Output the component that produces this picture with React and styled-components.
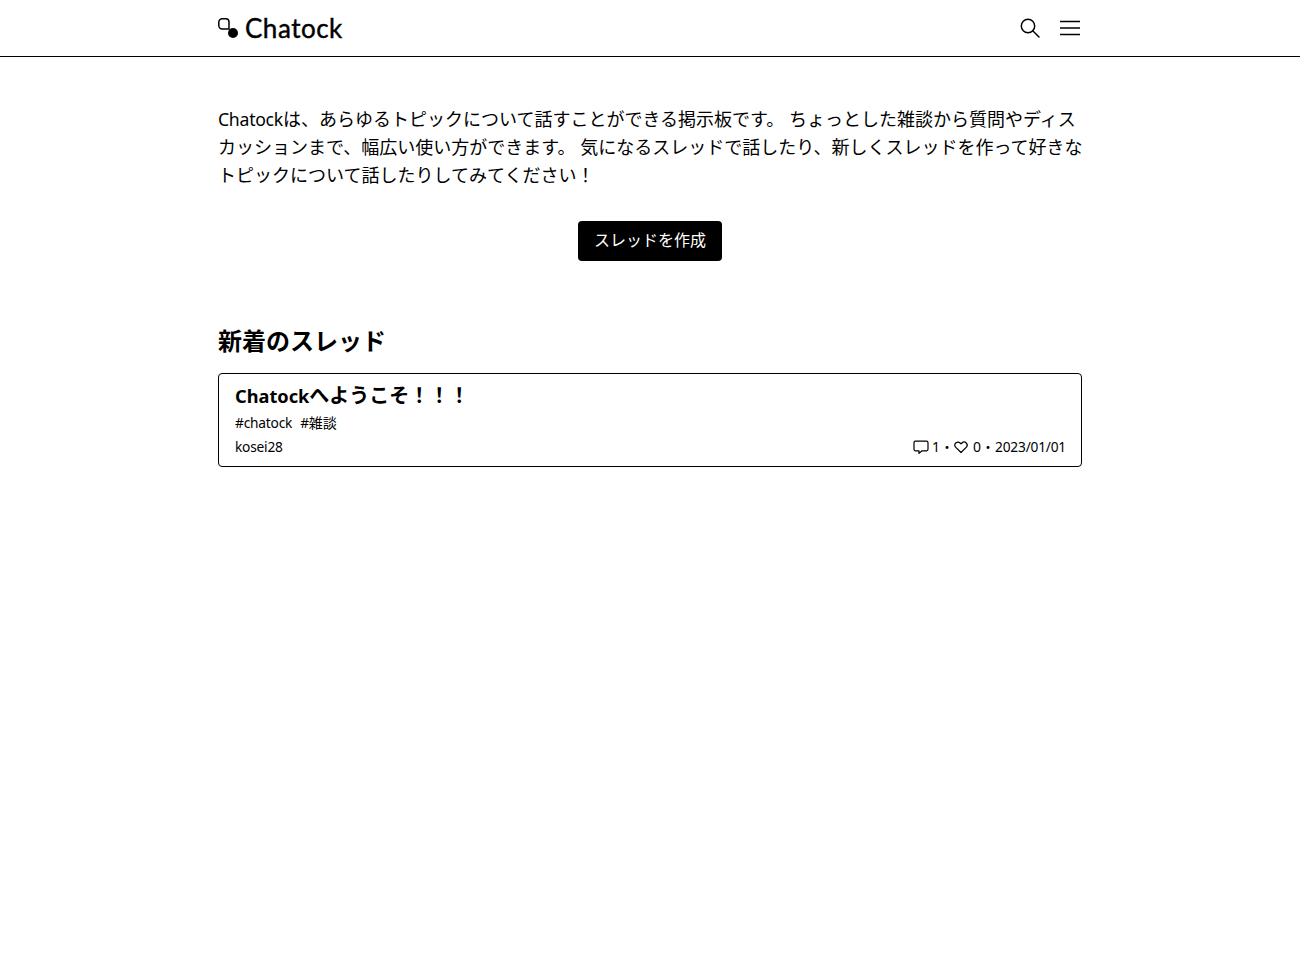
import React from 'react'
import styled, { createGlobalStyle } from 'styled-components'

const Global = createGlobalStyle`
  * { box-sizing: border-box; }
  body {
    margin: 0;
    background: #fff;
    color: #000;
    font-family: "Noto Sans", "Noto Sans CJK JP", sans-serif;
  }
`

const Header = styled.header`
  height: 57px;
  border-bottom: 1px solid #000;
  display: flex;
  justify-content: center;
`

const HeaderInner = styled.div`
  width: 864px;
  display: flex;
  align-items: center;
  justify-content: space-between;
`

const Logo = styled.a`
  display: flex;
  align-items: center;
  gap: 7px;
  font-family: "Lato", sans-serif;
  font-size: 26px;
  line-height: 56px;
  letter-spacing: 0.5px;
  -webkit-text-stroke: 0.4px #000;
  color: #000;
`

const IconRow = styled.div`
  display: flex;
  align-items: center;
  gap: 20px;
  margin-right: 2px;
`

const Main = styled.main`
  width: 864px;
  margin: 0 auto;
  padding-top: 48px;
`

const Intro = styled.p`
  margin: 0 -4px 0 0;
  font-size: 18px;
  line-height: 28px;
`

// latin text runs a bit narrower than the japanese around it
const Latin = styled.span`
  font-size: ${(p) => p.$scale || 0.98}em;
  letter-spacing: ${(p) => (p.$scale ? 0 : -0.015)}em;
  line-height: 1;
`

const ButtonRow = styled.div`
  display: flex;
  justify-content: center;
  margin-top: 32px;
`

const Button = styled.button`
  height: 40px;
  padding: 0 16px 2px;
  border: 0;
  border-radius: 4px;
  background: #000;
  color: #fff;
  font: inherit;
  font-size: 16px;
  line-height: 38px;
`

const Heading = styled.h2`
  margin: 64px 0 16px;
  font-size: 24px;
  line-height: 32px;
  font-weight: 700;
`

const Card = styled.article`
  border: 1px solid #000;
  border-radius: 4px;
  padding: 8px 16px;
  height: 94px;
`

const Title = styled.h3`
  margin: 0;
  font-size: 20px;
  line-height: 28px;
  font-weight: 700;
`

const Tags = styled.div`
  display: flex;
  gap: 8px;
  font-size: 14px;
  line-height: 24px;
  margin-top: 1px;
`

const Meta = styled.div`
  display: flex;
  justify-content: space-between;
  align-items: center;
  font-size: 14px;
  line-height: 24px;
`

const Stats = styled.div`
  display: flex;
  align-items: center;
  margin-right: -1px;
`

const Stat = styled.span`
  display: flex;
  align-items: center;
  gap: ${(p) => p.$gap || 4}px;
`

const Dot = styled.span`
  width: ${(p) => p.$width || 14}px;
  text-align: center;
`

const LogoMark = () => (
  <svg width="20" height="20" viewBox="0 0 20 20" fill="none">
    <path d="M4.200.8H7.800a3.200 3.200 0 0 1 3.200 3.200V11H4.200A3.400 3.400 0 0 1 .8 7.600V4.200A3.400 3.400 0 0 1 4.200.8Z" stroke="#000" strokeWidth="1.5" />
    <circle cx="15" cy="15" r="5" fill="#000" />
  </svg>
)

const SearchIcon = () => (
  <svg width="20" height="20" viewBox="0 0 20 20" fill="none" stroke="#000" strokeWidth="1.5" strokeLinecap="round">
    <circle cx="8" cy="8" r="6.7" />
    <path d="M13 13l6 6" />
  </svg>
)

const MenuIcon = () => (
  <svg width="20" height="16" viewBox="0 0 20 16" fill="none" stroke="#000" strokeWidth="1.4">
    <path d="M0 1.5h20M0 8h20M0 14.500h20" />
  </svg>
)

const CommentIcon = () => (
  <svg width="16" height="16" viewBox="0 0 16 16" fill="none" stroke="#000" strokeWidth="1.2" strokeLinejoin="round">
    <path d="M2.500 2.200h11a1.500 1.500 0 0 1 1.500 1.500v6.600a1.500 1.500 0 0 1-1.500 1.500H9l-3 2.600v-2.600H2.500A1.500 1.500 0 0 1 1 10.300V3.700a1.500 1.500 0 0 1 1.500-1.500Z" />
  </svg>
)

const HeartIcon = () => (
  <svg width="16" height="16" viewBox="0 0 16 16" fill="none" stroke="#000" strokeWidth="1.2" strokeLinejoin="round">
    <path d="M8 13.500 2.800 8.300a3 3 0 0 1 4.300-4.300l.9.900.9-.9a3 3 0 0 1 4.300 4.300Z" />
  </svg>
)

const App = () => {
  return (
    <>
      <Global />
      <Header>
        <HeaderInner>
          <Logo><LogoMark />Chatock</Logo>
          <IconRow><SearchIcon /><MenuIcon /></IconRow>
        </HeaderInner>
      </Header>
      <Main>
        <Intro>
          <Latin>Chatock</Latin>は、あらゆるトピックについて話すことができる掲示板です。 ちょっとした雑談から質問やディスカッションまで、幅広い使い方ができます。 気になるスレッドで話したり、新しくスレッドを作って好きなトピックについて話したりしてみてください！
        </Intro>
        <ButtonRow><Button>スレッドを作成</Button></ButtonRow>
        <Heading>新着のスレッド</Heading>
        <Card>
          <Title><Latin $scale={0.91}>Chatock</Latin>へようこそ！！！</Title>
          <Tags><span><Latin>#chatock</Latin></span><span><Latin>#</Latin>雑談</span></Tags>
          <Meta>
            <Latin>kosei28</Latin>
            <Stats>
              <Stat $gap={3}><CommentIcon />1</Stat>
              <Dot $width={13}>・</Dot>
              <Stat><HeartIcon />0</Stat>
              <Dot>・</Dot>
              <Latin>2023/01/01</Latin>
            </Stats>
          </Meta>
        </Card>
      </Main>
    </>
  )
}

export default App
